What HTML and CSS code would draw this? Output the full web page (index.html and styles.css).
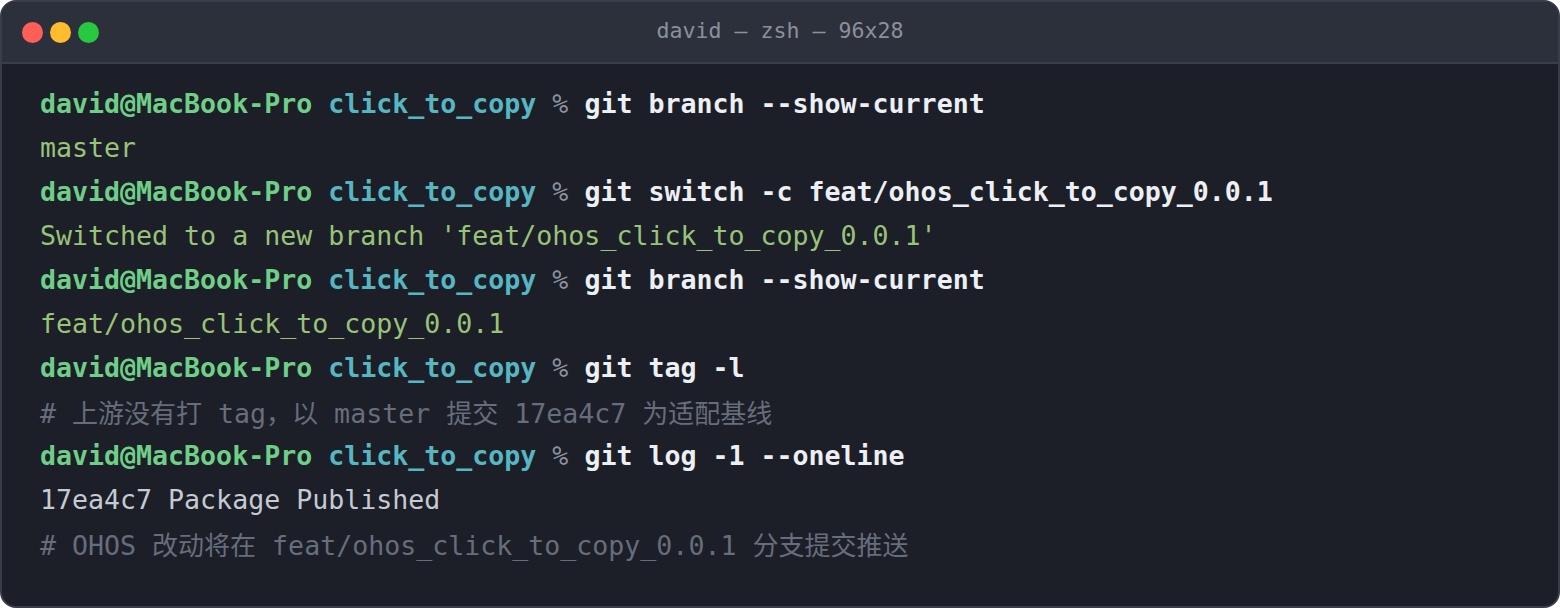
FILE: index.html
```html
<!DOCTYPE html>
<html lang="zh-CN">
<head>
<meta charset="utf-8">
<title>david — zsh — 96x28</title>
<link rel="stylesheet" href="styles.css">
</head>
<body>
<div class="window">
  <div class="titlebar">
    <div class="lights">
      <span class="light red"></span>
      <span class="light yellow"></span>
      <span class="light green"></span>
    </div>
    <div class="title">david — zsh — 96x28</div>
  </div>
  <div class="term">
    <div class="line"><span class="user">david@MacBook-Pro</span> <span class="dir">click_to_copy</span> <span class="pct">%</span> <span class="cmd">git branch --show-current</span></div>
    <div class="line out">master</div>
    <div class="line"><span class="user">david@MacBook-Pro</span> <span class="dir">click_to_copy</span> <span class="pct">%</span> <span class="cmd">git switch -c feat/ohos_click_to_copy_0.0.1</span></div>
    <div class="line out">Switched to a new branch 'feat/ohos_click_to_copy_0.0.1'</div>
    <div class="line"><span class="user">david@MacBook-Pro</span> <span class="dir">click_to_copy</span> <span class="pct">%</span> <span class="cmd">git branch --show-current</span></div>
    <div class="line out">feat/ohos_click_to_copy_0.0.1</div>
    <div class="line"><span class="user">david@MacBook-Pro</span> <span class="dir">click_to_copy</span> <span class="pct">%</span> <span class="cmd">git tag -l</span></div>
    <div class="line comment"># <span class="cjk">上游没有打</span> tag<span class="cjk">，以</span> master <span class="cjk">提交</span> 17ea4c7 <span class="cjk">为适配基线</span></div>
    <div class="line"><span class="user">david@MacBook-Pro</span> <span class="dir">click_to_copy</span> <span class="pct">%</span> <span class="cmd">git log -1 --oneline</span></div>
    <div class="line plain">17ea4c7 Package Published</div>
    <div class="line comment"># OHOS <span class="cjk">改动将在</span> feat/ohos_click_to_copy_0.0.1 <span class="cjk">分支提交推送</span></div>
  </div>
</div>
</body>
</html>
```

FILE: styles.css
```css
html, body {
  margin: 0;
  padding: 0;
  background: #ffffff;
}

.window {
  box-sizing: border-box;
  width: 1560px;
  height: 608px;
  border: 2px solid #393d49;
  border-radius: 16px;
  overflow: hidden;
  background: #1c1f27;
  display: flex;
  flex-direction: column;
}

.titlebar {
  position: relative;
  height: 60px;
  flex: 0 0 60px;
  background: #2c303b;
  border-bottom: 2px solid #393d49;
  display: flex;
  align-items: center;
}

.lights {
  display: flex;
  gap: 7px;
  padding-left: 20px;
}

.light {
  width: 21px;
  height: 21px;
  border-radius: 50%;
  display: block;
}

.red { background: #ff5f57; }
.yellow { background: #febc2e; }
.green { background: #28c840; }

.title {
  position: absolute;
  left: 0;
  right: 0;
  top: 0;
  height: 60px;
  line-height: 58px;
  text-align: center;
  font-family: "DejaVu Sans Mono", monospace;
  font-size: 21.6px;
  color: #8a909b;
  pointer-events: none;
}

.term {
  padding: 18px 38px;
  font-family: "DejaVu Sans Mono", "Noto Sans CJK SC", monospace;
  font-size: 26.6px;
  line-height: 44px;
}

.line {
  height: 44px;
  white-space: pre;
}

.cjk {
  font-family: "Noto Sans CJK SC", sans-serif;
  font-size: 26px;
}

.user {
  color: #6fcf88;
  font-weight: bold;
}

.dir {
  color: #56b6c2;
  font-weight: bold;
}

.pct {
  color: #8a919e;
}

.cmd {
  color: #eceff4;
  font-weight: bold;
}

.out {
  color: #98c379;
}

.plain {
  color: #c5cad3;
}

.comment {
  color: #666d7c;
}
```
